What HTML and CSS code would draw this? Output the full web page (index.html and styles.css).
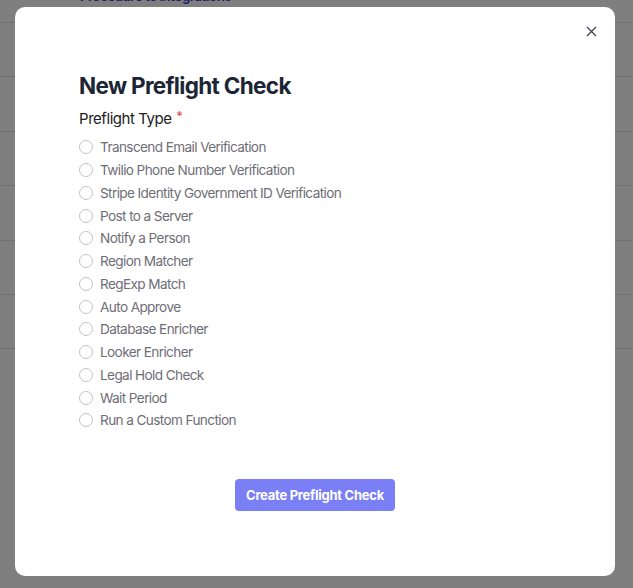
FILE: index.html
```html
<!DOCTYPE html>
<html>
<head>
<meta charset="utf-8">
<link rel="stylesheet" href="styles.css">
</head>
<body>
<div class="page">
  <div class="top-row"><span class="link">Procedure to integrations</span></div>
  <div class="row"></div>
  <div class="row"></div>
  <div class="row"></div>
  <div class="row"></div>
  <div class="row"></div>
  <div class="row"></div>
</div>
<div class="overlay"></div>
<div class="modal">
  <button class="close" aria-label="Close">
    <svg width="11" height="11" viewBox="0 0 11 11"><path d="M1 1L10 10M10 1L1 10" stroke="#3b4556" stroke-width="1.3" fill="none"/></svg>
  </button>
  <h1 class="title">New Preflight Check</h1>
  <div class="label">Preflight Type <span class="req">*</span></div>
  <ul class="options">
    <li><span class="radio"></span>Transcend Email Verification</li>
    <li><span class="radio"></span>Twilio Phone Number Verification</li>
    <li><span class="radio"></span>Stripe Identity Government ID Verification</li>
    <li><span class="radio"></span>Post to a Server</li>
    <li><span class="radio"></span>Notify a Person</li>
    <li><span class="radio"></span>Region Matcher</li>
    <li><span class="radio"></span>RegExp Match</li>
    <li><span class="radio"></span>Auto Approve</li>
    <li><span class="radio"></span>Database Enricher</li>
    <li><span class="radio"></span>Looker Enricher</li>
    <li><span class="radio"></span>Legal Hold Check</li>
    <li><span class="radio"></span>Wait Period</li>
    <li><span class="radio"></span>Run a Custom Function</li>
  </ul>
  <div class="actions">
    <button class="primary">Create Preflight Check</button>
  </div>
</div>
</body>
</html>
```
FILE: styles.css
```css
html, body {
  margin: 0;
  padding: 0;
}
body {
  width: 633px;
  height: 588px;
  overflow: hidden;
  background: #fff;
  font-family: Inter, "Noto Sans", sans-serif;
  position: relative;
}
.page {
  display: flex;
  flex-direction: column;
}
.top-row {
  height: 23px;
  border-bottom: 1px solid #e0e0e0;
  box-sizing: border-box;
  padding-left: 80px;
  position: relative;
}
.link {
  display: block;
  margin-top: -10px;
  color: #3a3ad0;
  font-weight: 700;
  font-size: 13px;
  line-height: 13px;
  letter-spacing: -0.03em;
}
.row {
  height: 54.4px;
  border-bottom: 1px solid #e0e0e0;
  box-sizing: border-box;
}
.overlay {
  position: absolute;
  inset: 0;
  background: rgba(0, 0, 0, 0.5);
}
.modal {
  position: absolute;
  left: 15px;
  top: 7px;
  width: 600px;
  height: 569px;
  background: #fff;
  border-radius: 10px;
  box-sizing: border-box;
  padding: 65px 64px 0 64px;
  display: flex;
  flex-direction: column;
}
.close {
  position: absolute;
  right: 18px;
  top: 19px;
  border: 0;
  background: none;
  padding: 0;
  width: 11px;
  height: 11px;
  display: flex;
}
.title {
  margin: 0;
  font-size: 22.5px;
  line-height: 28px;
  font-weight: 700;
  color: #1c2535;
  letter-spacing: -0.03em;
}
.label {
  margin-top: 6px;
  font-size: 15px;
  line-height: 20px;
  color: #212121;
  letter-spacing: -0.03em;
}
.req {
  color: #e5484d;
  font-size: 13px;
  vertical-align: 3px;
  margin-left: 1px;
}
.options {
  list-style: none;
  margin: 7px 0 0 0;
  padding: 0;
  display: flex;
  flex-direction: column;
}
.options li {
  display: flex;
  align-items: center;
  height: 22.75px;
  font-size: 13.6px;
  color: #6e6e76;
  letter-spacing: -0.045em;
}
.radio {
  width: 12px;
  height: 12px;
  border: 1px solid #c4c4c8;
  border-radius: 50%;
  margin-right: 7px;
  flex: none;
}
.actions {
  margin-top: 47px;
  display: flex;
  justify-content: center;
}
.primary {
  background: #7b7ff5;
  color: #fff;
  border: 0;
  border-radius: 4px;
  height: 32px;
  padding: 0 11px;
  font-family: Inter, "Noto Sans", sans-serif;
  font-weight: 700;
  font-size: 13px;
  letter-spacing: -0.02em;
}
```
